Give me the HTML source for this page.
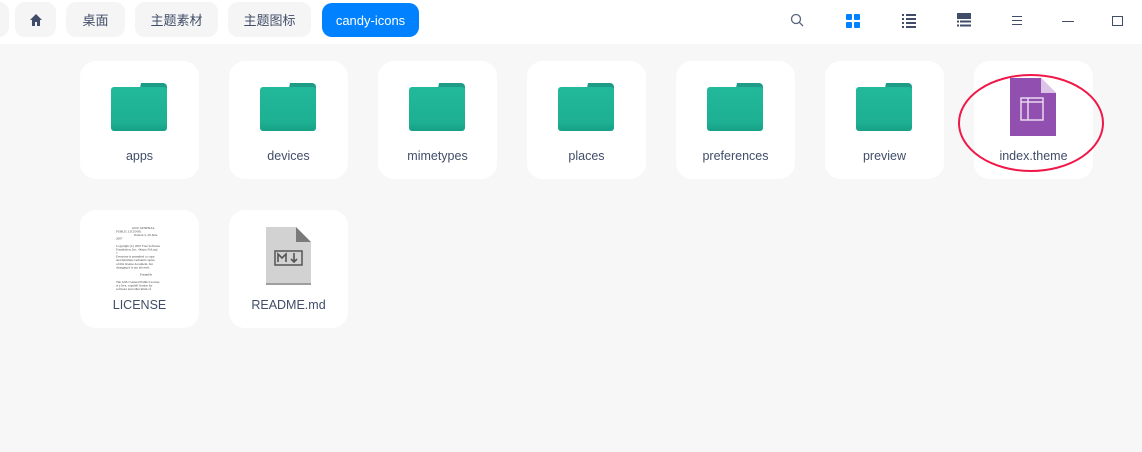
<!DOCTYPE html>
<html><head><meta charset="utf-8"><style>
*{margin:0;padding:0;box-sizing:border-box}
body{width:1142px;height:452px;background:#f7f7f7;font-family:"Liberation Sans","Noto Sans CJK SC",sans-serif;position:relative;overflow:hidden}
.hdr{position:absolute;left:0;top:0;width:1142px;height:44px;background:#fff}
.b{position:absolute;top:2px;height:35px;background:#f5f5f5;border-radius:10px;font-size:13px;color:#414d68;display:flex;align-items:center;justify-content:center}
.t{position:absolute;width:119px;height:118px;background:#fff;border-radius:16px}
.l{position:absolute;left:0;width:100%;top:88px;text-align:center;font-size:12.5px;color:#414d68}
.f{position:absolute;left:31px;top:22px}
.lic{position:absolute;left:36px;top:16px;width:120px;font-size:8px;line-height:9px;color:#444;font-family:'Liberation Serif',serif;transform:scale(0.4);transform-origin:0 0;white-space:nowrap}
</style></head><body>
<div class="hdr"></div>
<div class="b" style="left:-20px;width:29px"></div>
<div class="b" style="left:15px;width:41px"><svg width="14" height="14" viewBox="0 0 14 14"><path d="M7 1L1 7h2v6h3v-4h2v4h3V7h2z" fill="#414d68"/></svg></div>
<div class="b" style="left:66px;width:59px">桌面</div>
<div class="b" style="left:135px;width:83px">主题素材</div>
<div class="b" style="left:228px;width:83px">主题图标</div>
<div class="b" style="left:322px;width:97px;top:3px;height:34px;background:#0081ff;color:#fff">candy-icons</div>
<svg style="position:absolute;left:790px;top:13px" width="14" height="14"><circle cx="6" cy="6" r="4.5" fill="none" stroke="#5a6478" stroke-width="1.3"/><path d="M9.3 9.3L13 13" stroke="#5a6478" stroke-width="1.3"/></svg>
<svg style="position:absolute;left:846px;top:14px" width="14" height="14" fill="#0081ff"><rect width="6" height="6" rx="1"/><rect x="8" width="6" height="6" rx="1"/><rect y="8" width="6" height="6" rx="1"/><rect x="8" y="8" width="6" height="6" rx="1"/></svg>
<svg style="position:absolute;left:902px;top:14px" width="14" height="14" fill="#414d68"><rect width="2" height="2"/><rect x="4" width="10" height="2"/><rect y="4" width="2" height="2"/><rect x="4" y="4" width="10" height="2"/><rect y="8" width="2" height="2"/><rect x="4" y="8" width="10" height="2"/><rect y="12" width="2" height="2"/><rect x="4" y="12" width="10" height="2"/></svg>
<svg style="position:absolute;left:957px;top:13px" width="14" height="15" fill="#414d68"><rect width="14" height="6"/><rect y="7.5" width="2" height="2"/><rect x="3" y="7.5" width="11" height="2"/><rect y="11.5" width="2" height="2"/><rect x="3" y="11.5" width="11" height="2"/></svg>
<svg style="position:absolute;left:1012px;top:15px" width="10" height="11" stroke="#414d68" stroke-width="1"><path d="M0 1.5h10M0 5.5h10M0 9.5h10"/></svg>
<div style="position:absolute;left:1062px;top:21px;width:12px;height:1px;background:#414d68"></div>
<div style="position:absolute;left:1112px;top:16px;width:11px;height:10px;border:1.3px solid #414d68"></div>

<svg width="0" height="0" style="position:absolute"><defs><linearGradient id="g" x1="0" y1="0" x2="0" y2="1"><stop offset="0" stop-color="#22b99a"/><stop offset="0.8" stop-color="#1db092"/><stop offset="1" stop-color="#17a085"/></linearGradient></defs></svg>

<div class="t" style="left:80px;top:61px"><svg class="f" width="56" height="48"><path d="M30 0h22a4 4 0 014 4v6H28z" fill="#1f9c88"/><rect y="4" width="56" height="44" rx="3" fill="url(#g)"/></svg><div class="l">apps</div></div>
<div class="t" style="left:229px;top:61px"><svg class="f" width="56" height="48"><path d="M30 0h22a4 4 0 014 4v6H28z" fill="#1f9c88"/><rect y="4" width="56" height="44" rx="3" fill="url(#g)"/></svg><div class="l">devices</div></div>
<div class="t" style="left:378px;top:61px"><svg class="f" width="56" height="48"><path d="M30 0h22a4 4 0 014 4v6H28z" fill="#1f9c88"/><rect y="4" width="56" height="44" rx="3" fill="url(#g)"/></svg><div class="l">mimetypes</div></div>
<div class="t" style="left:527px;top:61px"><svg class="f" width="56" height="48"><path d="M30 0h22a4 4 0 014 4v6H28z" fill="#1f9c88"/><rect y="4" width="56" height="44" rx="3" fill="url(#g)"/></svg><div class="l">places</div></div>
<div class="t" style="left:676px;top:61px"><svg class="f" width="56" height="48"><path d="M30 0h22a4 4 0 014 4v6H28z" fill="#1f9c88"/><rect y="4" width="56" height="44" rx="3" fill="url(#g)"/></svg><div class="l">preferences</div></div>
<div class="t" style="left:825px;top:61px"><svg class="f" width="56" height="48"><path d="M30 0h22a4 4 0 014 4v6H28z" fill="#1f9c88"/><rect y="4" width="56" height="44" rx="3" fill="url(#g)"/></svg><div class="l">preview</div></div>
<div class="t" style="left:974px;top:61px"><svg style="position:absolute;left:36px;top:17px" width="46" height="58"><path d="M0 0h31l15 15v43H0z" fill="#914fb0"/><path d="M31 0v15h15z" fill="#dcc4e8"/><rect x="11" y="20" width="22" height="22" fill="none" stroke="#e8d8f0" stroke-width="1.5"/><path d="M11 24h22M18 20v22" stroke="#e8d8f0" stroke-width="1.5"/></svg><div class="l">index.theme</div></div>

<div class="t" style="left:80px;top:210px"><div class="lic">&nbsp;&nbsp;&nbsp;&nbsp;&nbsp;&nbsp;&nbsp;&nbsp;&nbsp;&nbsp;&nbsp;&nbsp;&nbsp;&nbsp;&nbsp;&nbsp;&nbsp;&nbsp;&nbsp;&nbsp;GNU GENERAL<br>PUBLIC LICENSE<br>&nbsp;&nbsp;&nbsp;&nbsp;&nbsp;&nbsp;&nbsp;&nbsp;&nbsp;&nbsp;&nbsp;&nbsp;&nbsp;&nbsp;&nbsp;&nbsp;&nbsp;&nbsp;&nbsp;&nbsp;&nbsp;&nbsp;Version 3, 29 June<br>2007<br><br>Copyright (C) 2007 Free Software<br>Foundation, Inc. &lt;https://fsf.org/<br>&gt;<br>Everyone is permitted to copy<br>and distribute verbatim copies<br>of this license document, but<br>changing it is not allowed.<br><br>&nbsp;&nbsp;&nbsp;&nbsp;&nbsp;&nbsp;&nbsp;&nbsp;&nbsp;&nbsp;&nbsp;&nbsp;&nbsp;&nbsp;&nbsp;&nbsp;&nbsp;&nbsp;&nbsp;&nbsp;&nbsp;&nbsp;&nbsp;&nbsp;&nbsp;&nbsp;&nbsp;&nbsp;&nbsp;&nbsp;Preamble<br><br>The GNU General Public License<br>is a free, copyleft license for<br>software and other kinds of</div><div class="l">LICENSE</div></div>
<div class="t" style="left:229px;top:210px"><svg style="position:absolute;left:37px;top:17px" width="45" height="58"><path d="M0 0h30l15 15v43H0z" fill="#d2d2d2"/><path d="M30 0v15h15z" fill="#7a7a7a"/><rect y="56" width="45" height="2" fill="#9e9e9e"/><rect x="9" y="24" width="27" height="14" fill="none" stroke="#555" stroke-width="1.5"/><path d="M12 35v-8l4 4 4-4v8M28 26v9M25 32l3 3 3-3" fill="none" stroke="#555" stroke-width="1.6"/></svg><div class="l">README.md</div></div>

<svg style="position:absolute;left:955px;top:73px" width="155" height="102"><ellipse cx="76" cy="50" rx="72" ry="48" fill="none" stroke="#ef1848" stroke-width="2"/></svg>
</body></html>
